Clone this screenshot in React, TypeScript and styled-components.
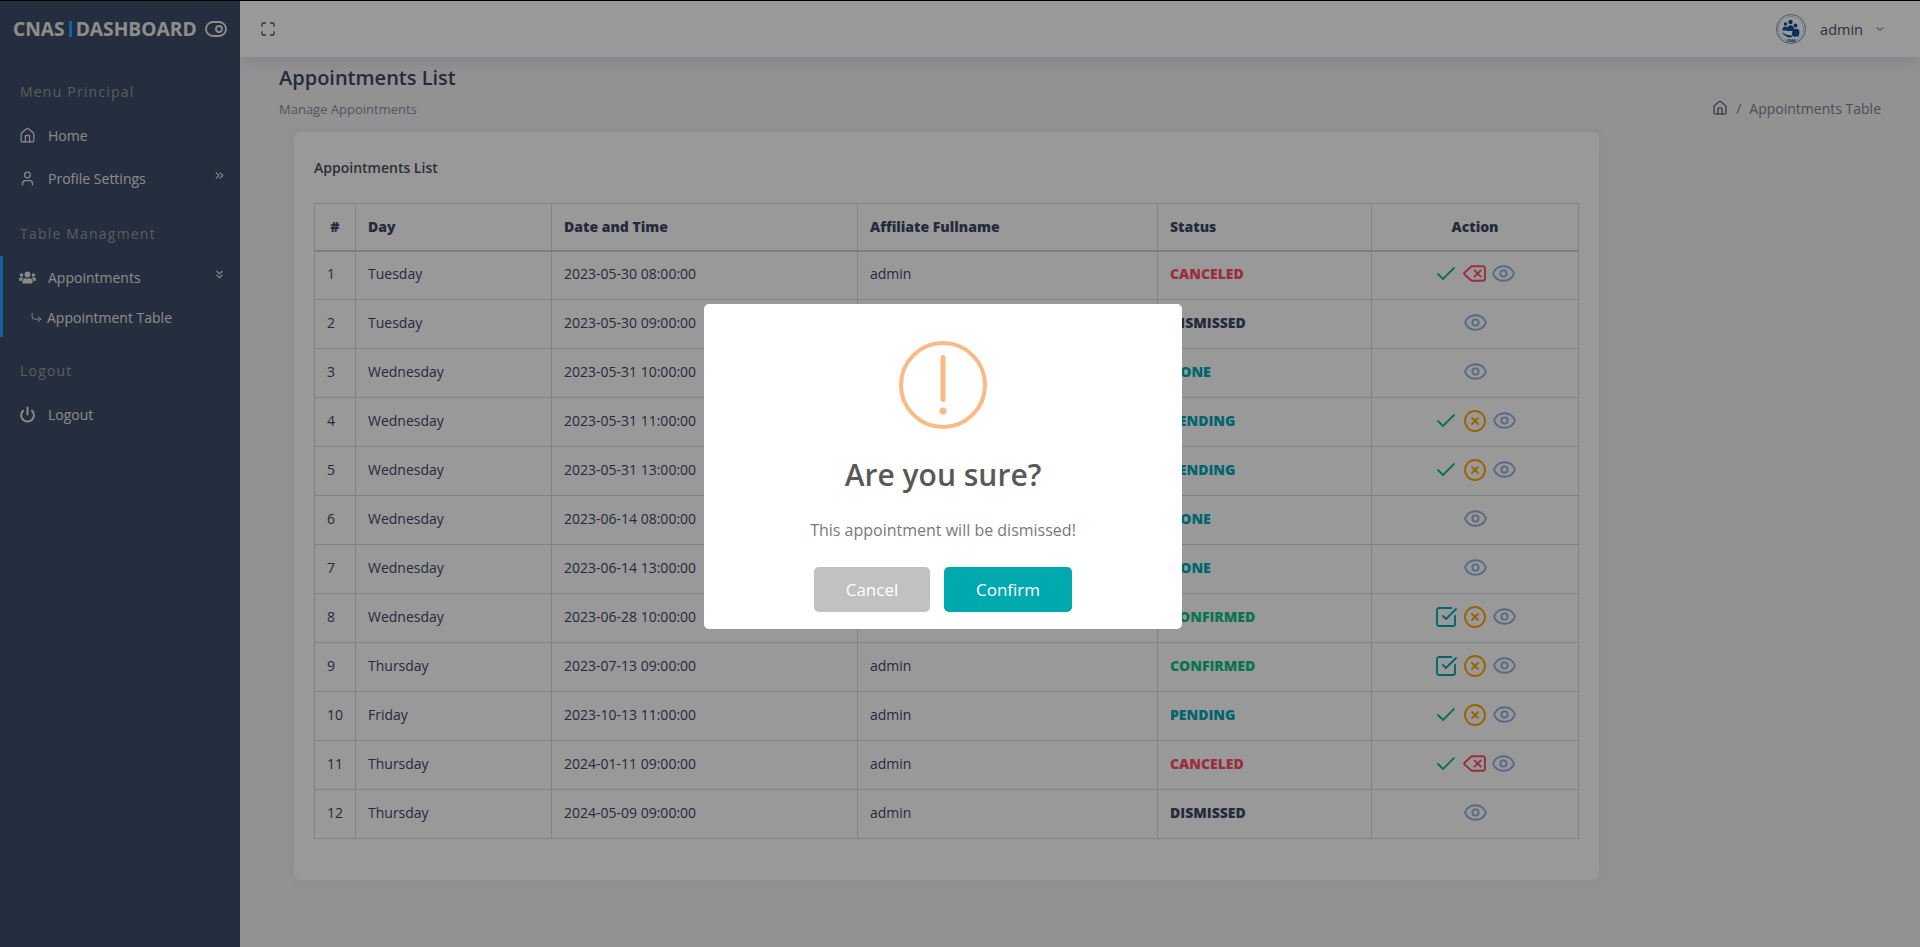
import React from 'react';
import styled, { createGlobalStyle } from 'styled-components';
import {
  House,
  User,
  ChevronsRight,
  ChevronsDown,
  ChevronDown,
  CornerDownRight,
  ToggleRight,
  Maximize,
  Check,
  CircleX,
  Eye,
  Delete,
  SquareCheckBig,
  Power,
} from 'lucide-react';
import { FaUsers } from 'react-icons/fa';

const GlobalStyle = createGlobalStyle`
  html, body {
    margin: 0;
    padding: 0;
    background: #f3f3f6;
    font-family: "Open Sans", "Liberation Sans", sans-serif;
    overflow: hidden;
  }
  * { box-sizing: border-box; }
`;

const Page = styled.div`
  display: flex;
  height: 947px;
  border-top: 1px solid #000;
`;

const Sidebar = styled.aside`
  width: 240px;
  flex-shrink: 0;
  background: #3e4e68;
  color: #e8e8e8;
`;

const Brand = styled.div`
  display: flex;
  align-items: center;
  height: 57px;
  padding: 0 0 2px 13px;
  font-size: 19.2px;
  font-weight: 700;
  color: #ececec;
`;

const BrandBar = styled.span`
  width: 3px;
  height: 16px;
  margin: 0 4px;
  background: #1fa8ff;
`;

const BrandToggle = styled.span`
  display: flex;
  margin-left: 7px;
`;

const GroupTitle = styled.div`
  padding: 0 20px;
  margin: 23px 0 11px;
  height: 22px;
  line-height: 22px;
  font-size: 14px;
  letter-spacing: 1.2px;
  color: #969a9f;
`;

const Group = styled.div<{ $active?: boolean }>`
  border-left: 3px solid ${(p) => (p.$active ? '#1fa8ff' : 'transparent')};
`;

const NavItem = styled.div`
  display: flex;
  align-items: center;
  height: 43px;
  padding-left: 13px;
  font-size: 14px;
  color: #e6e6e6;
`;

const NavIcon = styled.span`
  display: flex;
  justify-content: center;
  width: 22px;
  margin-right: 10px;
`;

const NavArrow = styled.span`
  display: flex;
  margin-left: auto;
  margin-right: 14px;
  margin-top: -6px;
`;

const SubItem = styled.div`
  display: flex;
  align-items: center;
  gap: 4px;
  height: 38px;
  padding: 0 0 2px 27px;
  font-size: 14px;
  color: #e6e6e6;
`;

const Main = styled.main`
  flex: 1;
  display: flex;
  flex-direction: column;
  min-width: 0;
`;

const TopBar = styled.header`
  display: flex;
  align-items: center;
  height: 56px;
  padding: 0 34px 0 20px;
  background: #fff;
  box-shadow: 0 4px 16px rgba(60, 70, 100, 0.14);
`;

const UserBox = styled.div`
  display: flex;
  align-items: center;
  margin-left: auto;
  font-size: 14.500px;
  color: #4b5468;
`;

const UserName = styled.span`
  margin: 0 11px 0 14px;
`;

const PageHead = styled.div`
  display: flex;
  justify-content: space-between;
  padding: 7px 39px 0;
`;

const PageTitle = styled.h1`
  margin: 0;
  font-size: 20px;
  line-height: 27px;
  font-weight: 600;
  color: #3e4864;
`;

const PageSub = styled.div`
  margin-top: 9px;
  font-size: 13px;
  line-height: 18px;
  color: #8a8f9a;
`;

const Crumbs = styled.div`
  display: flex;
  align-items: center;
  gap: 8px;
  height: 24px;
  margin-top: 32px;
  font-size: 14px;
  color: #7d828c;
`;

const Card = styled.section`
  width: 1305px;
  margin: 12px 0 0 54px;
  padding: 26px 20px 41px;
  background: #fff;
  border-radius: 6px;
  box-shadow: 0 0 12px rgba(60, 70, 100, 0.06);
`;

const CardTitle = styled.h2`
  margin: 0 0 25px;
  font-size: 14px;
  line-height: 20px;
  font-weight: 600;
  color: #4a4f5c;
`;

const Table = styled.table`
  width: 1264px;
  table-layout: fixed;
  border-collapse: collapse;
  font-size: 14px;
  color: #3e4864;
`;

const Col = styled.col<{ $w: number }>`
  width: ${(p) => p.$w}px;
`;

const Th = styled.th<{ $center?: boolean }>`
  height: 47px;
  padding: 0 12px 1px;
  border: 1px solid #d9d9d9;
  border-bottom: 2px solid #d2d2d2;
  text-align: ${(p) => (p.$center ? 'center' : 'left')};
  font-weight: 800;
  font-size: 14px;
`;

const Td = styled.td`
  height: 49px;
  padding: 0 12px 3px;
  border: 1px solid #d9d9d9;
`;

const Status = styled.span<{ $color: string }>`
  font-weight: 800;
  font-size: 14px;
  color: ${(p) => p.$color};
`;

const Actions = styled.div`
  display: flex;
  justify-content: center;
  align-items: center;
  gap: 5px;
`;

const DeleteIcon = styled(Delete)`
  margin: 0 -1px;
`;

const Overlay = styled.div`
  position: fixed;
  inset: 0;
  display: flex;
  align-items: flex-start;
  justify-content: center;
  background: rgba(0, 0, 0, 0.4);
`;

const Modal = styled.div`
  display: flex;
  flex-direction: column;
  align-items: center;
  width: 478px;
  height: 325px;
  margin-top: 304px;
  margin-left: -34px;
  padding-top: 37px;
  background: #fff;
  border-radius: 5px;
`;

const ModalTitle = styled.h2`
  margin: 26px 0 0;
  font-size: 30px;
  line-height: 40px;
  font-weight: 600;
  color: #595959;
`;

const ModalText = styled.p`
  margin: 24px 0 0;
  font-size: 16px;
  line-height: 22px;
  color: #797979;
`;

const ModalButtons = styled.div`
  display: flex;
  gap: 14px;
  margin-top: 26px;
`;

const ModalButton = styled.button<{ $primary?: boolean }>`
  width: ${(p) => (p.$primary ? '128px' : '116px')};
  height: 45px;
  border: 0;
  border-radius: 5px;
  background: ${(p) => (p.$primary ? '#00a9ae' : '#c1c1c1')};
  color: #fff;
  font-family: inherit;
  font-size: 17px;
`;

const STATUS: Record<string, string> = {
  CANCELED: '#ff4d68',
  DISMISSED: '#3e4864',
  DONE: '#00a8b4',
  PENDING: '#00a8b4',
  CONFIRMED: '#10c088',
};

const ROWS: [string, string, string][] = [
  ['Tuesday', '2023-05-30 08:00:00', 'CANCELED'],
  ['Tuesday', '2023-05-30 09:00:00', 'DISMISSED'],
  ['Wednesday', '2023-05-31 10:00:00', 'DONE'],
  ['Wednesday', '2023-05-31 11:00:00', 'PENDING'],
  ['Wednesday', '2023-05-31 13:00:00', 'PENDING'],
  ['Wednesday', '2023-06-14 08:00:00', 'DONE'],
  ['Wednesday', '2023-06-14 13:00:00', 'DONE'],
  ['Wednesday', '2023-06-28 10:00:00', 'CONFIRMED'],
  ['Thursday', '2023-07-13 09:00:00', 'CONFIRMED'],
  ['Friday', '2023-10-13 11:00:00', 'PENDING'],
  ['Thursday', '2024-01-11 09:00:00', 'CANCELED'],
  ['Thursday', '2024-05-09 09:00:00', 'DISMISSED'],
];

const COLS = [41, 196, 306, 300, 214, 207];

const EyeIcon = () => <Eye size={25} strokeWidth={1.8} color="#94b0d8" />;

const RowActions: React.FC<{ status: string }> = ({ status }) => {
  if (status === 'DISMISSED' || status === 'DONE') {
    return (
      <Actions>
        <EyeIcon />
      </Actions>
    );
  }
  return (
    <Actions>
      {status === 'CONFIRMED' ? (
        <SquareCheckBig size={24} strokeWidth={1.8} color="#00a8b4" />
      ) : (
        <Check size={24} strokeWidth={1.8} color="#10c088" />
      )}
      {status === 'CANCELED' ? (
        <DeleteIcon size={25} strokeWidth={1.8} color="#ff4d68" />
      ) : (
        <CircleX size={24} strokeWidth={1.8} color="#ffa500" />
      )}
      <EyeIcon />
    </Actions>
  );
};

const Logo = () => (
  <svg width="30" height="30" viewBox="0 0 30 30">
    <circle cx="15" cy="15" r="14.5" fill="#fff" stroke="#2c6ea8" strokeWidth="0.7" />
    <circle cx="15" cy="15" r="12.5" fill="none" stroke="#2c6ea8" strokeWidth="0.6" strokeDasharray="1 1" />
    <g fill="#0e4f94">
      <circle cx="14.5" cy="8" r="2.2" />
      <circle cx="9.500" cy="10" r="1.7" />
      <circle cx="19.500" cy="11.500" r="1.9" />
      <path d="M11 15c0-5 7-5 7 0v2h-7z" />
      <path d="M6.500 15c0-3.500 5.500-3.500 5.500 0v1.500H6.500z" />
      <path d="M16 20c0-6.500 8-7 7.500-1l-1 3.500H17z" />
      <path d="M5.500 18c3 2.500 7 3.500 11.500 3.500l-2 2c-4 0-7.500-2-9.500-5.500z" />
    </g>
    <text x="15" y="28" fontSize="3.6" fontWeight="700" textAnchor="middle" fill="#0e4f94">CNAS</text>
  </svg>
);

const App: React.FC = () => (
  <>
    <GlobalStyle />
    <Page>
      <Sidebar>
        <Brand>
          CNAS
          <BrandBar />
          DASHBOARD
          <BrandToggle>
            <ToggleRight size={24} strokeWidth={1.8} />
          </BrandToggle>
        </Brand>
        <GroupTitle>Menu Principal</GroupTitle>
        <Group>
          <NavItem>
            <NavIcon><House size={17} strokeWidth={1.8} /></NavIcon>
            Home
          </NavItem>
          <NavItem>
            <NavIcon><User size={17} strokeWidth={1.8} /></NavIcon>
            Profile Settings
            <NavArrow><ChevronsRight size={13} /></NavArrow>
          </NavItem>
        </Group>
        <GroupTitle>Table Managment</GroupTitle>
        <Group $active>
          <NavItem>
            <NavIcon><FaUsers size={17} /></NavIcon>
            Appointments
            <NavArrow><ChevronsDown size={13} /></NavArrow>
          </NavItem>
          <SubItem>
            <CornerDownRight size={13} strokeWidth={1.7} />
            Appointment Table
          </SubItem>
        </Group>
        <GroupTitle>Logout</GroupTitle>
        <Group>
          <NavItem>
            <NavIcon><Power size={17} strokeWidth={2.8} /></NavIcon>
            Logout
          </NavItem>
        </Group>
      </Sidebar>
      <Main>
        <TopBar>
          <Maximize size={16} strokeWidth={2} color="#4b5468" />
          <UserBox>
            <Logo />
            <UserName>admin</UserName>
            <ChevronDown size={12} strokeWidth={2} />
          </UserBox>
        </TopBar>
        <PageHead>
          <div>
            <PageTitle>Appointments List</PageTitle>
            <PageSub>Manage Appointments</PageSub>
          </div>
          <Crumbs>
            <House size={16} strokeWidth={1.8} color="#4b5468" />
            <span>/</span>
            <span>Appointments Table</span>
          </Crumbs>
        </PageHead>
        <Card>
          <CardTitle>Appointments List</CardTitle>
          <Table>
            <colgroup>
              {COLS.map((w, i) => (
                <Col key={i} $w={w} />
              ))}
            </colgroup>
            <thead>
              <tr>
                <Th $center>#</Th>
                <Th>Day</Th>
                <Th>Date and Time</Th>
                <Th>Affiliate Fullname</Th>
                <Th>Status</Th>
                <Th $center>Action</Th>
              </tr>
            </thead>
            <tbody>
              {ROWS.map(([day, date, status], i) => (
                <tr key={date}>
                  <Td>{i + 1}</Td>
                  <Td>{day}</Td>
                  <Td>{date}</Td>
                  <Td>admin</Td>
                  <Td><Status $color={STATUS[status]}>{status}</Status></Td>
                  <Td><RowActions status={status} /></Td>
                </tr>
              ))}
            </tbody>
          </Table>
        </Card>
      </Main>
    </Page>
    <Overlay>
      <Modal>
        <svg width="88" height="88" viewBox="0 0 88 88">
          <circle cx="44" cy="44" r="42" fill="none" stroke="#f8bb86" strokeWidth="4" />
          <rect x="41.500" y="14" width="5" height="47" rx="2.500" fill="#f8bb86" />
          <circle cx="44" cy="70" r="3.500" fill="#f8bb86" />
        </svg>
        <ModalTitle>Are you sure?</ModalTitle>
        <ModalText>This appointment will be dismissed!</ModalText>
        <ModalButtons>
          <ModalButton>Cancel</ModalButton>
          <ModalButton $primary>Confirm</ModalButton>
        </ModalButtons>
      </Modal>
    </Overlay>
  </>
);

export default App;
